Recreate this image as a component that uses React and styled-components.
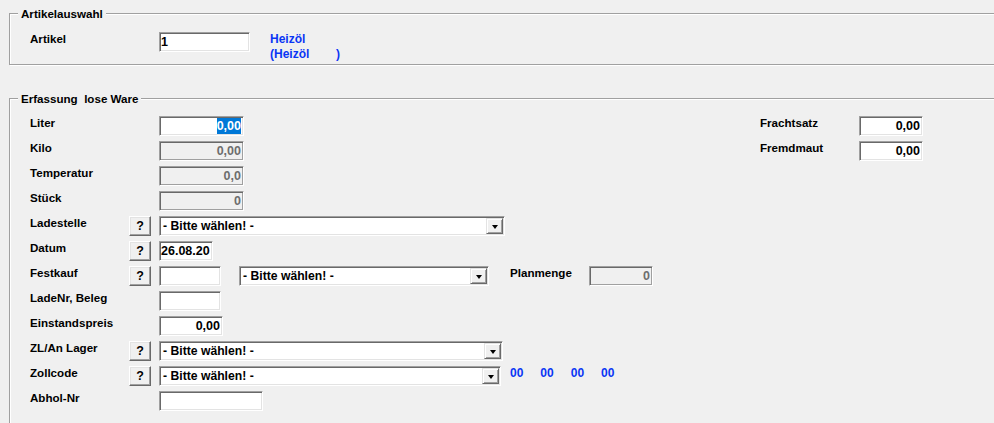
import React from 'react'
import styled, { createGlobalStyle } from 'styled-components'

const GlobalStyle = createGlobalStyle`
  html, body {
    margin: 0;
    padding: 0;
    background: #f0f0f0;
  }
  body {
    font-family: "Liberation Sans", Arial, sans-serif;
    font-size: 11.6px;
    font-weight: bold;
    color: #000;
    overflow: hidden;
  }
`;

const Page = styled.div`
  width: 994px;
  height: 423px;
  overflow: hidden;
  padding-top: 13px;
  box-sizing: border-box;
`;

const Group = styled.div`
  position: relative;
  margin-left: 9px;
  width: 1000px;
  min-height: ${props => props.minH || 0}px;
  box-sizing: border-box;
  border: 1px solid #a0a0a0;
  box-shadow: inset 1px 1px 0 #fff, 1px 1px 0 #fff;
  padding: ${props => props.pad};
  margin-bottom: ${props => props.mb || 0}px;
`;

const Legend = styled.div`
  position: absolute;
  top: -7px;
  left: 8px;
  padding: 0 3px;
  line-height: 14px;
  background: #f0f0f0;
  white-space: pre;
`;

const Columns = styled.div`
  display: flex;
`;

const LeftCol = styled.div`
  width: 730px;
`;

const RightCol = styled.div`
  flex: 1;
`;

const Row = styled.div`
  display: flex;
  align-items: flex-start;
  height: ${props => (props.auto ? 'auto' : '20px')};
  margin-bottom: ${props => (props.auto ? 0 : 5)}px;
`;

const Label = styled.div`
  width: ${props => props.w}px;
  flex-shrink: 0;
  line-height: 14px;
  white-space: nowrap;
`;

const HelpButton = styled.div`
  width: 22px;
  height: 20px;
  box-sizing: border-box;
  margin-right: 8px;
  background: #f0f0f0;
  border-top: 1px solid #fff;
  border-left: 1px solid #fff;
  border-right: 1px solid #696969;
  border-bottom: 1px solid #696969;
  box-shadow: inset -1px -1px 0 #a0a0a0, inset 1px 1px 0 #e3e3e3;
  display: flex;
  align-items: center;
  justify-content: center;
  font-size: 12.5px;
  line-height: 14px;
`;

const Field = styled.div`
  width: ${props => props.w}px;
  height: 20px;
  flex-shrink: 0;
  box-sizing: border-box;
  margin-left: ${props => props.ml || 0}px;
  background: ${props => (props.disabled ? '#f0f0f0' : '#fff')};
  color: ${props => (props.disabled ? '#6d6d6d' : '#000')};
  border-top: 1px solid #a0a0a0;
  border-left: 1px solid #a0a0a0;
  border-right: 1px solid #fff;
  border-bottom: 1px solid #fff;
  box-shadow: inset 1px 1px 0 #696969,
    inset -1px -1px 0 ${props => (props.disabled ? '#a0a0a0' : '#e3e3e3')};
  padding: 0 2px 0 1px;
  font-size: 12.5px;
  line-height: 18px;
  text-align: ${props => (props.right ? 'right' : 'left')};
  white-space: nowrap;
  overflow: hidden;
`;

const Selected = styled.span`
  background: #0078d7;
  color: #fff;
  padding: 1px 0;
`;

const Combo = styled(Field)`
  display: flex;
  align-items: center;
  padding: 0 1px 0 3px;
  font-size: 12.2px;
`;

const ComboText = styled.div`
  flex: 1;
`;

const DropButton = styled.div`
  width: 17px;
  height: 16px;
  box-sizing: border-box;
  background: #f0f0f0;
  border-top: 1px solid #e3e3e3;
  border-left: 1px solid #e3e3e3;
  border-right: 1px solid #696969;
  border-bottom: 1px solid #696969;
  box-shadow: inset 1px 1px 0 #fff, inset -1px -1px 0 #a0a0a0;
  display: flex;
  align-items: center;
  justify-content: center;

  &::after {
    content: '';
    border-left: 3.5px solid transparent;
    border-right: 3.5px solid transparent;
    border-top: 4px solid #000;
    margin-top: 1px;
  }
`;

const BlueInfo = styled.div`
  margin-left: 20px;
  color: #0a36f5;
  font-size: 12px;
  line-height: 15px;
  white-space: pre;
`;

const Codes = styled.div`
  display: flex;
  gap: 17px;
  margin-left: 9px;
  color: #0a36f5;
  font-size: 12px;
  line-height: 14px;
`;

const Spacer = styled.div`
  width: ${props => props.w}px;
  flex-shrink: 0;
`;

const ComboBox = ({ w, ml }) => (
  <Combo w={w} ml={ml}>
    <ComboText>- Bitte wählen! -</ComboText>
    <DropButton />
  </Combo>
);

const App = () => {
  return (
    <>
      <GlobalStyle />
      <Page>
        <Group pad="18px 0 2px 20px" mb={33}>
          <Legend>Artikelauswahl</Legend>
          <Row auto>
            <Label w={129}>Artikel</Label>
            <Field w={91}>1</Field>
            <BlueInfo>{'Heizöl\n(Heizöl        )'}</BlueInfo>
          </Row>
        </Group>

        <Group pad="17px 0 0 20px" minH={340}>
          <Legend>{'Erfassung  lose Ware'}</Legend>
          <Columns>
            <LeftCol>
              <Row>
                <Label w={129}>Liter</Label>
                <Field w={85} right>
                  <Selected>0,00</Selected>
                </Field>
              </Row>
              <Row>
                <Label w={129}>Kilo</Label>
                <Field w={85} right disabled>0,00</Field>
              </Row>
              <Row>
                <Label w={129}>Temperatur</Label>
                <Field w={85} right disabled>0,0</Field>
              </Row>
              <Row>
                <Label w={129}>Stück</Label>
                <Field w={85} right disabled>0</Field>
              </Row>
              <Row>
                <Label w={99}>Ladestelle</Label>
                <HelpButton>?</HelpButton>
                <ComboBox w={346} />
              </Row>
              <Row>
                <Label w={99}>Datum</Label>
                <HelpButton>?</HelpButton>
                <Field w={54}>26.08.20</Field>
              </Row>
              <Row>
                <Label w={99}>Festkauf</Label>
                <HelpButton>?</HelpButton>
                <Field w={62} />
                <ComboBox w={250} ml={18} />
                <Spacer w={21} />
                <Label w={79}>Planmenge</Label>
                <Field w={64} right disabled>0</Field>
              </Row>
              <Row>
                <Label w={129}>LadeNr, Beleg</Label>
                <Field w={62} />
              </Row>
              <Row>
                <Label w={129}>Einstandspreis</Label>
                <Field w={64} right>0,00</Field>
              </Row>
              <Row>
                <Label w={99}>ZL/An Lager</Label>
                <HelpButton>?</HelpButton>
                <ComboBox w={344} />
              </Row>
              <Row>
                <Label w={99}>Zollcode</Label>
                <HelpButton>?</HelpButton>
                <ComboBox w={342} />
                <Codes>
                  <span>00</span>
                  <span>00</span>
                  <span>00</span>
                  <span>00</span>
                </Codes>
              </Row>
              <Row>
                <Label w={129}>Abhol-Nr</Label>
                <Field w={104} />
              </Row>
            </LeftCol>
            <RightCol>
              <Row>
                <Label w={99}>Frachtsatz</Label>
                <Field w={64} right>0,00</Field>
              </Row>
              <Row>
                <Label w={99}>Fremdmaut</Label>
                <Field w={64} right>0,00</Field>
              </Row>
            </RightCol>
          </Columns>
        </Group>
      </Page>
    </>
  )
}

export default App
